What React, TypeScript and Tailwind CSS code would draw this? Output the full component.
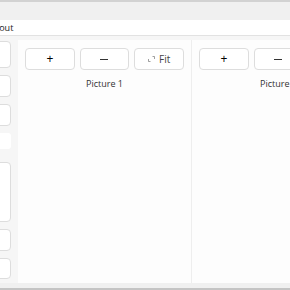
const Btn = ({ children, className = "" }: { children?: React.ReactNode; className?: string }) => (
  <div
    className={`flex items-center justify-center rounded-[4px] border border-[#dddddd] bg-white text-[10px] text-[#1a1a1a] ${className}`}
  >
    {children}
  </div>
);

const FitIcon = () => (
  <svg width="7" height="6" viewBox="0 0 7 6" className="mr-[4px]">
    <path d="M0.5 3 V5.5 H2.5" stroke="#777" strokeWidth="0.7" fill="none" />
    <path d="M4.5 0.5 H6.5 V3" stroke="#777" strokeWidth="0.7" fill="none" />
  </svg>
);

const PicturePanel = ({ name }: { name: string }) => (
  <div className="flex w-[174px] shrink-0 flex-col border-r border-[#eeeeee] bg-[#fdfdfd] px-[7px] pt-[8px]">
    <div className="grid grid-cols-3 gap-[5px]">
      <Btn className="h-[22px] text-[12px] text-black">+</Btn>
      <Btn className="h-[22px]">
        <span className="block h-px w-[8px] bg-[#333]" />
      </Btn>
      <Btn className="h-[22px] text-[9px] text-[#444]">
        <FitIcon />
        Fit
      </Btn>
    </div>
    <div className="mt-[7px] text-center text-[9px] text-[#333]">{name}</div>
  </div>
);

export default function App() {
  return (
    <div
      className="flex h-[290px] w-[290px] flex-col overflow-hidden bg-[#f6f6f6]"
      style={{ fontFamily: '"Open Sans", "Noto Sans", sans-serif' }}
    >
      <div className="h-[20px] shrink-0 border-t-2 border-[#d2d2d2] bg-[#f0f0f0]" />
      <div className="flex h-[16px] shrink-0 items-center border-b border-[#e2e2e2] bg-white">
        <span className="ml-[-12px] text-[9px] text-[#222]">About</span>
      </div>
      <div className="flex min-h-0 flex-1">
        <div className="ml-[-40px] flex w-[51px] shrink-0 flex-col pt-[5px]">
          <Btn className="h-[27px]" />
          <Btn className="mt-[7px] h-[22px]" />
          <Btn className="mt-[7px] h-[22px]" />
          <div className="mt-[7px] h-[16px] rounded-[3px] bg-white" />
          <Btn className="mt-[13px] h-[60px]" />
          <Btn className="mt-[7px] h-[22px]" />
          <Btn className="mt-[7px] h-[21px]" />
        </div>
        <div className="ml-[7px] mt-[4px] flex">
          <PicturePanel name="Picture 1" />
          <PicturePanel name="Picture 2" />
        </div>
      </div>
      <div className="h-[7px] shrink-0 border-b-2 border-[#c4c4c4] bg-[#f0f0f0]" />
    </div>
  );
}
